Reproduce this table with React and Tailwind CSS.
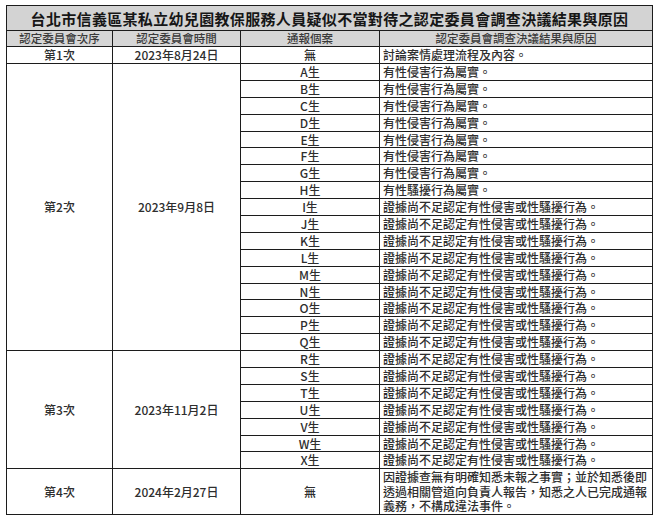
import React from "react";

const F = { fontFamily: '"Noto Sans CJK TC", "Noto Sans CJK SC", sans-serif' };

const students = "ABCDEFGHIJKLMNOPQRSTUVWX".split("");
const r1 = {
  A: "有性侵害行為屬實。",
  B: "有性侵害行為屬實。",
  C: "有性侵害行為屬實。",
  D: "有性侵害行為屬實。",
  E: "有性侵害行為屬實。",
  F: "有性侵害行為屬實。",
  G: "有性侵害行為屬實。",
  H: "有性騷擾行為屬實。",
};
const NO = "證據尚不足認定有性侵害或性騷擾行為。";

const B = "border-[1.5px] border-[#1c1c1c]";
const base = "text-[12px] font-medium text-[#2e2e2e]";
const cellC = `${B} ${base} text-center leading-none p-0`;
const cellL = `${B} ${base} text-left leading-none py-0 pl-[3px] pr-0`;

export default function App() {
  return (
    <div className="w-[656px] h-[518px] bg-white pt-[5px] pl-[6px]" style={F}>
      <table className="table-fixed border-collapse w-[646px]">
        <colgroup>
          <col className="w-[106px]" />
          <col className="w-[128px]" />
          <col className="w-[139px]" />
          <col className="w-[273px]" />
        </colgroup>
        <tbody>
          <tr className="h-[25px]">
            <td colSpan={4} className={`${B} bg-[#d3d3d3] text-center text-[15px] font-bold tracking-[0.33px] text-[#161616] leading-none p-0`}>
              台北市信義區某私立幼兒園教保服務人員疑似不當對待之認定委員會調查決議結果與原因
            </td>
          </tr>
          <tr className="h-[16px] bg-[#d6d6d6]">
            <td className={`${B} text-center leading-none p-0 text-[11.5px] font-medium text-[#3a3a3a]`}>認定委員會次序</td>
            <td className={`${B} text-center leading-none p-0 text-[11.5px] font-medium text-[#3a3a3a]`}>認定委員會時間</td>
            <td className={`${B} text-center leading-none p-0 text-[11.5px] font-medium text-[#3a3a3a]`}>通報個案</td>
            <td className={`${B} text-center leading-none p-0 text-[11.5px] font-medium text-[#3a3a3a]`}>認定委員會調查決議結果與原因</td>
          </tr>
          <tr className="h-[17px]">
            <td className={cellC}>第1次</td>
            <td className={cellC}>2023年8月24日</td>
            <td className={cellC}>無</td>
            <td className={cellL}>討論案情處理流程及內容。</td>
          </tr>
          {students.map((s, i) => (
            <tr key={s} className="h-[16.9px]">
              {i === 0 && (
                <>
                  <td rowSpan={17} className={cellC}>第2次</td>
                  <td rowSpan={17} className={cellC}>2023年9月8日</td>
                </>
              )}
              {i === 17 && (
                <>
                  <td rowSpan={7} className={cellC}>第3次</td>
                  <td rowSpan={7} className={cellC}>2023年11月2日</td>
                </>
              )}
              <td className={cellC}>{s}生</td>
              <td className={cellL}>{r1[s] || NO}</td>
            </tr>
          ))}
          <tr className="h-[46px]">
            <td className={cellC}>第4次</td>
            <td className={cellC}>2024年2月27日</td>
            <td className={cellC}>無</td>
            <td className={`${B} ${base} text-left leading-[14.5px] py-0 pl-[3px] pr-0`}>
              因證據查無有明確知悉未報之事實；並於知悉後即透過相關管道向負責人報告，知悉之人已完成通報義務，不構成違法事件。
            </td>
          </tr>
        </tbody>
      </table>
    </div>
  );
}
